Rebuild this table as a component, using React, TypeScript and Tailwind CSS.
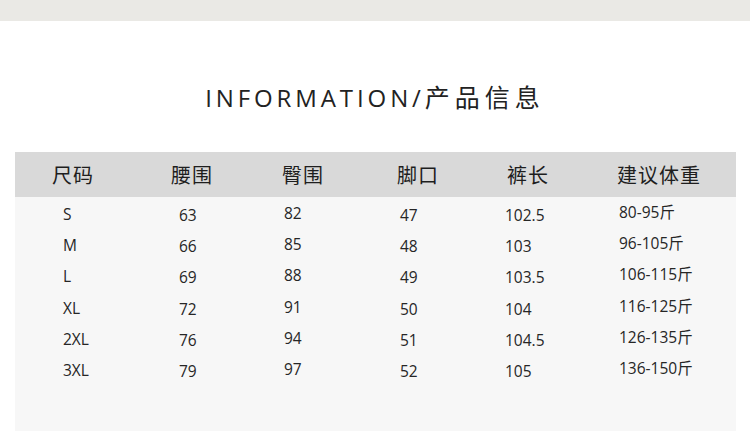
import React from "react";

const headers = ["尺码", "腰围", "臀围", "脚口", "裤长", "建议体重"];
const rows = [
  ["S", "63", "82", "47", "102.5", "80-95斤"],
  ["M", "66", "85", "48", "103", "96-105斤"],
  ["L", "69", "88", "49", "103.5", "106-115斤"],
  ["XL", "72", "91", "50", "104", "116-125斤"],
  ["2XL", "76", "94", "51", "104.5", "126-135斤"],
  ["3XL", "79", "97", "52", "105", "136-150斤"],
];

const bodyOffsets = [
  "ml-[11px]",
  "ml-[8px] translate-y-[1px]",
  "ml-[2px] -translate-y-[1px]",
  "ml-[3px] translate-y-[1px]",
  "-ml-[2px] translate-y-[1px]",
  "ml-[2px] -translate-y-[2px]",
];

const grid = "grid grid-cols-[119px_111px_115px_110px_110px_1fr] pl-[37px]";

export default function App() {
  return (
    <div
      className="w-[750px] h-[445px] bg-white overflow-hidden"
      style={{ fontFamily: '"Open Sans", "Noto Sans CJK SC", sans-serif' }}
    >
      <div className="h-[21px] bg-[#eae9e5]" />
      <div className="pt-[61px] h-[131px] flex justify-center">
        <h1 className="text-[24px] leading-[30px] text-[#222222] font-medium flex items-baseline">
          <span className="tracking-[3.9px]">INFORMATION/</span>
          <span className="text-[25px] tracking-[5px] font-normal">产品信息</span>
        </h1>
      </div>
      <div className="mx-[15px] w-[721px]">
        <div className={`${grid} h-[45px] items-center bg-[#d9d9d9] pt-[3px]`}>
          {headers.map((h) => (
            <div key={h} className="text-[20px] tracking-[1px] text-[#1e1e1e]">
              {h}
            </div>
          ))}
        </div>
        <div className="bg-[#f7f7f7] h-[234px] pt-[2px]">
          {rows.map((r) => (
            <div key={r[0]} className={`${grid} h-[31.2px] items-center`}>
              {r.map((c, i) => (
                <div key={i} className={`text-[15.5px] text-[#262626] ${bodyOffsets[i]}`}>
                  {c}
                </div>
              ))}
            </div>
          ))}
        </div>
      </div>
    </div>
  );
}
